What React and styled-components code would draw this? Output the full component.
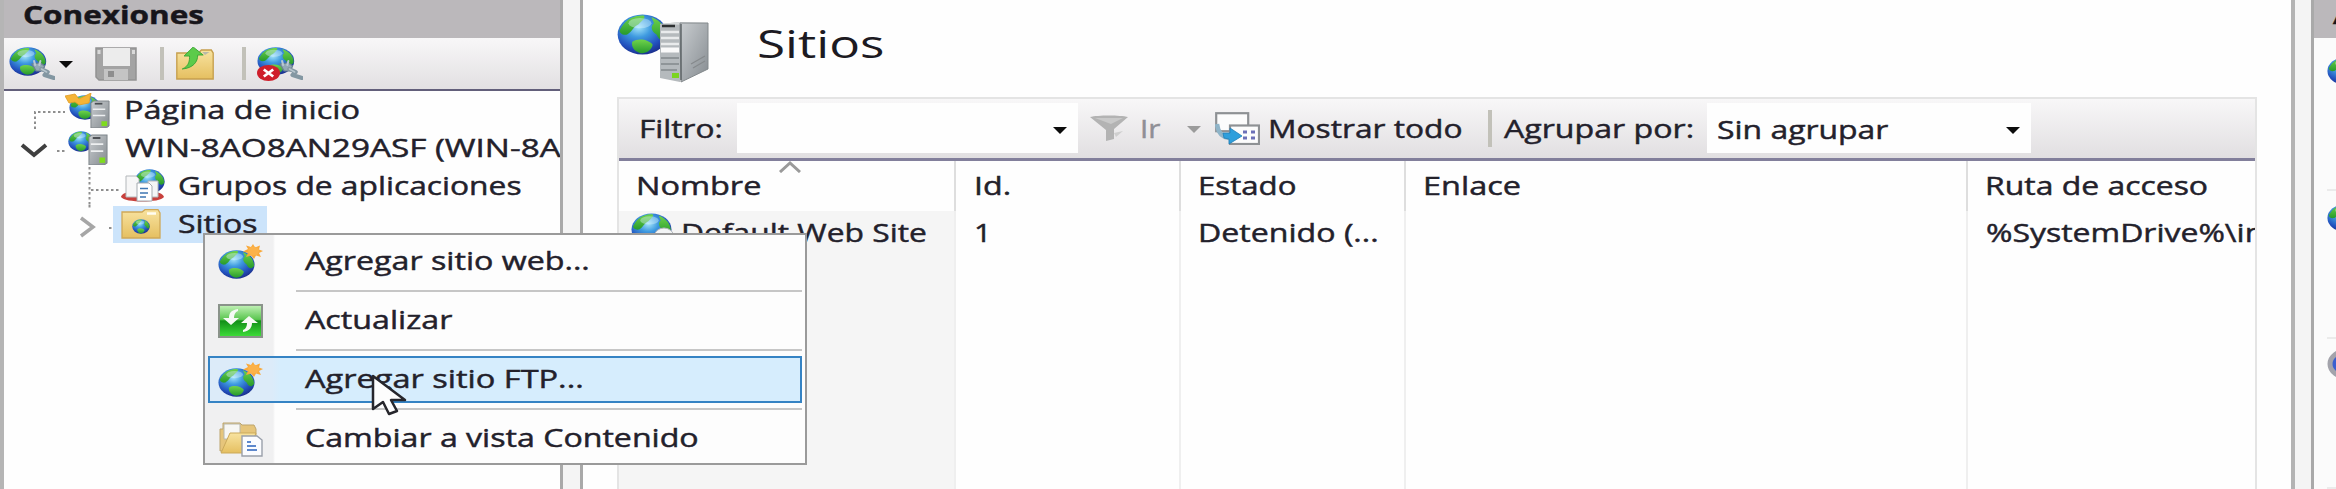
import React, { useLayoutEffect, useRef, useState } from "react";
import styled, { createGlobalStyle } from "styled-components";

const Global = createGlobalStyle`
  *, *::before, *::after { box-sizing: border-box; }
  html, body { margin: 0; padding: 0; background: #fdfdfd; }
  body {
    font-family: "Open Sans", "Noto Sans", sans-serif;
    font-size: 25.2px;
    color: #23212b;
    overflow: hidden;
  }
  svg { display: block; flex: none; }
`;

const Window = styled.div`
  position: relative;
  display: flex;
  width: 2336px;
  height: 489px;
  overflow: hidden;
  background: #fdfdfd;
`;

/* ---------- text ---------- */

const TextBox = styled.span`
  display: inline-block;
  flex: none;
  width: ${(p) => p.$w}px;
  height: 38px;
  line-height: 38px;
  margin-left: ${(p) => p.$gap || 0}px;
  white-space: nowrap;
  color: ${(p) => p.$color || "inherit"};
  font-size: ${(p) => (p.$size ? p.$size + "px" : "inherit")};
  font-weight: ${(p) => (p.$bold ? 700 : 400)};
  -webkit-text-stroke: ${(p) => (p.$size ? "0" : "0.45px currentColor")};
`;

const TextRun = styled.span`
  display: inline-block;
  transform-origin: 0 50%;
`;

/* Wide-set label: the run is stretched horizontally to fill its box. */
function Label({ children, w, ...rest }) {
  const ref = useRef(null);
  const [scale, setScale] = useState(1);
  useLayoutEffect(() => {
    setScale(w / ref.current.offsetWidth);
  }, [w]);
  return (
    <TextBox $w={w} {...rest}>
      <TextRun ref={ref} style={{ transform: `scaleX(${scale})` }}>
        {children}
      </TextRun>
    </TextBox>
  );
}

/* ---------- icons ---------- */

const HiddenDefs = styled.svg`
  position: absolute;
`;

function Gradients() {
  return (
    <HiddenDefs width="0" height="0">
      <defs>
        <radialGradient id="sea" cx="0.42" cy="0.32" r="0.7">
          <stop offset="0" stopColor="#a4e4fa" />
          <stop offset="0.35" stopColor="#3f9be0" />
          <stop offset="0.75" stopColor="#2250bd" />
          <stop offset="1" stopColor="#1b2f8c" />
        </radialGradient>
        <linearGradient id="land" x1="0" y1="0" x2="0" y2="1">
          <stop offset="0" stopColor="#6fd34b" />
          <stop offset="1" stopColor="#279a2c" />
        </linearGradient>
        <linearGradient id="folder" x1="0" y1="0" x2="0" y2="1">
          <stop offset="0" stopColor="#f8e3a0" />
          <stop offset="1" stopColor="#e5bf60" />
        </linearGradient>
        <linearGradient id="steel" x1="0" y1="0" x2="1" y2="1">
          <stop offset="0" stopColor="#c9cdd0" />
          <stop offset="1" stopColor="#858b90" />
        </linearGradient>
        <linearGradient id="refresh" x1="0" y1="0" x2="0" y2="1">
          <stop offset="0" stopColor="#c4f3b9" />
          <stop offset="0.45" stopColor="#5bc650" />
          <stop offset="0.5" stopColor="#128f18" />
          <stop offset="1" stopColor="#3fe03a" />
        </linearGradient>
      </defs>
    </HiddenDefs>
  );
}

const Icon = ({ w = 44, h = 34, vb = "0 0 44 34", children }) => (
  <svg width={w} height={h} viewBox={vb} preserveAspectRatio="none">
    {children}
  </svg>
);

/* Globe on a 40x40 grid. */
function Globe({ x = 0, y = 0, w = 36, h = 30, land = "url(#land)" }) {
  return (
    <g transform={`translate(${x} ${y}) scale(${w / 40} ${h / 40})`}>
      <circle cx="20" cy="20" r="19.5" fill="url(#sea)" />
      <path d="M4 12C8 4 15 1 21 1.500C23 4 19 7 17 10C13 12 12 17 8 20C4 21 2 18 2 16Z" fill={land} />
      <path d="M27 3C35 7 39 14 39 22C36 27 33 26 31 20C27 17 26 12 29 9Z" fill={land} />
      <path d="M12 27C17 23 25 25 28 30C27 36 22 39 18 38C13 36 11 31 12 27Z" fill={land} />
      <ellipse cx="18" cy="9" rx="9" ry="5" fill="#dff6ff" opacity="0.4" />
    </g>
  );
}

const Plug = () => (
  <g fill="none" strokeLinecap="round">
    <path d="M22 17L30 16L34 19L32 24L26 24Z" fill="#93a9b6" stroke="#6c8391" strokeWidth="1.200" />
    <path d="M24 14L25 18M30 14L29 18" stroke="#b9c8d1" strokeWidth="2" />
    <path d="M31 22L37 25L34 28L43 31" stroke="#8397a2" strokeWidth="4" strokeLinejoin="round" />
    <path d="M31 22L36 25" stroke="#b7c5cd" strokeWidth="1.500" />
  </g>
);

const ConnectIcon = () => (
  <Icon w={46}>
    <Globe w={36} h={29} />
    <Plug />
  </Icon>
);

const DisconnectIcon = () => (
  <Icon w={46}>
    <Globe w={36} h={28} />
    <Plug />
    <ellipse cx="11" cy="26" rx="11" ry="8" fill="#cf1f2b" />
    <path d="M6.500 22.500L15.500 29.500M15.500 22.500L6.500 29.500" stroke="#fff" strokeWidth="2.600" />
  </Icon>
);

const FloppyIcon = () => (
  <Icon>
    <path d="M2 1H42V33H5L2 30Z" fill="#a3a3a3" stroke="#939393" strokeWidth="1.500" />
    <rect x="9" y="1" width="27" height="18" fill="#ececec" />
    <rect x="10" y="22" width="24" height="11" fill="#c4c4c4" />
    <rect x="14" y="24" width="6" height="6" fill="#8e8e8e" />
    <rect x="3.500" y="3" width="3" height="4" fill="#d9d9d9" />
    <rect x="38" y="3" width="3" height="4" fill="#d9d9d9" />
  </Icon>
);

const UpFolderIcon = () => (
  <Icon w={40}>
    <path d="M2 6H26L29 3H40L42 6V32H2Z" fill="url(#folder)" stroke="#c69f4d" strokeWidth="1.500" />
    <path d="M30 5L38 5L33 8Z" fill="#b9b9a8" />
    <path d="M8 22C16 19 16 13 16 9H10L20 0L31 8H25C25 15 20 21 8 22Z" fill="#5ccb4a" stroke="#3ca637" strokeWidth="1" />
  </Icon>
);

const Tower = ({ x, y, w = 21, h = 28 }) => (
  <g transform={`translate(${x} ${y}) scale(${w / 21} ${h / 28})`}>
    <path d="M1 2L4 0H20V26L17 28H1Z" fill="url(#steel)" stroke="#7d8489" strokeWidth="1" />
    <path d="M5 2.800H13" stroke="#4a4e52" strokeWidth="1.800" />
    <path d="M3 8.500H16M3 15H16" stroke="#eef0f1" strokeWidth="1.500" />
    <rect x="12" y="21" width="6" height="5" fill="#7edb1e" />
  </g>
);

const HomeIcon = () => (
  <Icon w={46} h={35} vb="0 0 46 35">
    <Globe x={4} y={2} w={32} h={25} />
    <path d="M0 3L10 1L14 6L22 2L26 0L24 10L14 12L10 9L4 10Z" fill="#f5b437" stroke="#e09a22" strokeWidth="0.800" />
    <Tower x={25} y={8} w={20} h={27} />
  </Icon>
);

const ServerIcon = () => (
  <Icon w={42} h={34} vb="0 0 42 34">
    <Globe x={0} y={0} w={26} h={21} />
    <Tower x={20} y={4} w={20} h={30} />
  </Icon>
);

const PoolsIcon = () => (
  <Icon w={46} h={34} vb="0 0 46 34">
    <Globe x={14} y={0} w={31} h={25} />
    <path d="M1 28C2 23 10 22 22 23C34 22 43 23 44 28C40 34 5 34 1 28Z" fill="#c8403c" />
    <path d="M6 7H16L19 10V28H6Z" fill="#f7f7f7" stroke="#b4b8bb" />
    <path d="M28 12H38V28H28Z" fill="#f3f5f6" stroke="#b4b8bb" />
    <path d="M17 14H29L32 17V32H17Z" fill="#fff" stroke="#a5abb0" />
    <path d="M20 19.500H28M20 24H28M20 28H26" stroke="#3f77b3" strokeWidth="1.700" />
  </Icon>
);

const SitesIcon = () => (
  <Icon w={40} h={30} vb="0 0 40 30">
    <path d="M1 3H21L24 0.700H37L39 4V29H1Z" fill="url(#folder)" stroke="#cfa857" strokeWidth="1.300" />
    <path d="M26 4.500H35" stroke="#fffdf2" strokeWidth="2.500" />
    <Globe x={11} y={10} w={18} h={15} />
  </Icon>
);

const AddSiteIcon = () => (
  <Icon w={45} h={35} vb="0 0 45 35">
    <Globe x={0} y={6} w={37} h={29} />
    <path
      d="M35 0L37 3.500L42 1.500L41 5.500L45 7L41 9L43 13L38 11.500L36 15L33 11.500L28 13L30 9L25 7.500L30 5L28 1.500L33 3Z"
      fill="#f9a93a"
    />
    <ellipse cx="35.500" cy="7" rx="5.500" ry="4.500" fill="#fbb24a" />
  </Icon>
);

const RefreshIcon = () => (
  <Icon w={45} h={34} vb="0 0 45 34">
    <rect x="1" y="1" width="43" height="32" fill="url(#refresh)" stroke="#8a938a" strokeWidth="2" />
    <path d="M20 5C13 6 11 9 11 14H5L13 21L21 14H16C16 11 17 8 20 7Z" fill="#f6faf5" />
    <path d="M25 28C32 27 34 23 34 19H40L31 12L23 19H29C29 22 28 25 25 26Z" fill="#f6faf5" />
  </Icon>
);

const ContentIcon = () => (
  <Icon w={45} h={36} vb="0 0 45 36">
    <path d="M2 8H5V2H22L24 4H36L38 8V30H2Z" fill="#e6c57b" stroke="#bda56c" />
    <path d="M6 3H22V18H6Z" fill="#f7f7f4" stroke="#b8b8ac" />
    <path d="M3 32L12 12H38L30 32Z" fill="url(#folder)" stroke="#cba95a" />
    <path d="M24 15H39L44 19V35H24Z" fill="#fbfcff" stroke="#9aa0ab" strokeWidth="1.400" />
    <path d="M29 21H33M29 25H38M29 29H39" stroke="#5e88cc" strokeWidth="1.800" />
  </Icon>
);

const FeatureIcon = () => (
  <Icon w={92} h={69} vb="0 0 92 69">
    <Globe x={0} y={0} w={51} h={41} />
    <path d="M43 10L63 8V68L43 64Z" fill="#b5babd" />
    <path d="M43 10L63 8L91 9L72 11Z" fill="#d6d9da" />
    <path d="M63 9H91V55L64 68Z" fill="url(#steel)" stroke="#83898c" />
    <path d="M45 12H58" stroke="#2e3133" strokeWidth="2.500" />
    <path d="M44 18H62M44 24H62M44 30H62" stroke="#e9ebec" strokeWidth="2.600" />
    <path d="M44 36H62" stroke="#fafafa" strokeWidth="5" />
    <path d="M44 44H62M44 50H62M44 56H60" stroke="#8f9598" strokeWidth="1.800" />
    <path d="M64 10V66" stroke="#5e6467" strokeWidth="1.500" />
    <rect x="55" y="59" width="7" height="5" fill="#7bd41f" />
    <path d="M74 50L88 42M76 54L88 47" stroke="#85898c" strokeWidth="1.200" />
  </Icon>
);

const FunnelIcon = () => (
  <Icon w={38} h={27} vb="0 0 38 27">
    <path d="M0 2C8 0 30 0 38 2L24 14V24L16 26V15Z" fill="#b3b3b3" />
    <path d="M5 3H33L21 9Z" fill="#c9c9c9" />
    <path d="M24 18L33 16L26 22Z" fill="#cfcfcf" />
  </Icon>
);

const ShowAllIcon = () => (
  <Icon w={45} h={33} vb="0 0 45 33">
    <rect x="1.200" y="1.200" width="32" height="18" fill="#fcfcfc" stroke="#8e9194" strokeWidth="2.200" />
    <rect x="15" y="13.500" width="29" height="18.500" fill="#fcfcfc" stroke="#8e9194" strokeWidth="2.200" />
    <path d="M28 20H32M36 20H40M28 26H32M36 26H40" stroke="#6c70b8" strokeWidth="3" />
    <path d="M2 12C3 21 7 25 14 26" fill="none" stroke="#8fb4c8" strokeWidth="4.500" />
    <path d="M8 21L15 21V16L27 24L14 32V27L9 26Z" fill="#2e9fdc" stroke="#1f7fb8" strokeWidth="0.800" />
  </Icon>
);

const SiteIcon = () => (
  <Icon w={42} h={34} vb="0 0 42 34">
    <Globe x={0} y={0} w={41} h={33} />
    <ellipse cx="33" cy="24" rx="10" ry="9" fill="#f2f4f5" stroke="#b4b9bd" />
  </Icon>
);

const HelpIcon = () => (
  <Icon w={42} h={32} vb="0 0 42 32">
    <ellipse cx="21" cy="16" rx="18" ry="13.500" fill="#3b5fd0" stroke="#a3a3ab" strokeWidth="5" />
  </Icon>
);

const Caret = styled.span`
  flex: none;
  width: 0;
  height: 0;
  border: 7px solid transparent;
  border-top: 7px solid ${(p) => p.$color || "#0c0c0c"};
  border-bottom: 0;
  margin: 2px ${(p) => p.$right || 0}px 0 ${(p) => p.$left || 0}px;
`;

/* ---------- connections pane ---------- */

const Connections = styled.aside`
  flex: none;
  width: 563px;
  border-left: 4px solid #b5b5b5;
  border-right: 3px solid #a9a9a9;
  background: #fefefe;
  overflow: hidden;
`;

const PaneHeader = styled.header`
  display: flex;
  align-items: flex-start;
  height: 38px;
  padding: 0 0 0 ${(p) => p.$pad}px;
  background: #bbb8bb;
  overflow: hidden;
  color: #17151a;
  span { line-height: 29px; height: 29px; }
`;

const Toolbar = styled.div`
  display: flex;
  align-items: center;
  height: 53px;
  padding-left: 5px;
  background: linear-gradient(#f8f7f8, #e2e0e2);
  border-bottom: 2px solid #625f7a;
`;

const Separator = styled.span`
  flex: none;
  width: ${(p) => p.$w || 4}px;
  height: ${(p) => p.$h || 33}px;
  margin: 0 ${(p) => p.$right}px 0 ${(p) => p.$left}px;
  background: #c2c1b9;
`;

const Spacer = styled.span`
  flex: none;
  width: ${(p) => p.$w}px;
`;

const TreeRow = styled.div`
  display: flex;
  align-items: center;
  height: 38px;
  ${TextBox} { margin-top: -3px; }
`;

const SelectedNode = styled.div`
  display: flex;
  align-items: center;
  width: 154px;
  height: 37px;
  padding-left: 8px;
  background: #cce4fb;
`;

const Guide = ({ w, children }) => (
  <svg width={w} height="38" viewBox={`0 0 ${w} 38`} fill="none" stroke="#8e8e8e" strokeWidth="2" strokeDasharray="2.500 2.500">
    {children}
  </svg>
);

/* ---------- centre pane ---------- */

const Splitter = styled.div`
  flex: none;
  width: ${(p) => p.$w}px;
  background: #f4f4f4;
`;

const Main = styled.main`
  flex: none;
  width: 1715px;
  display: flex;
  flex-direction: column;
  padding: 14px 34px 0 34px;
  border-left: 3px solid #a9a9a9;
  border-right: 4px solid #b3b3b3;
  background: #fefefe;
`;

const FeatureTitle = styled.div`
  display: flex;
  height: 83px;
`;

const TitleText = styled.div`
  margin: 11px 0 0 48px;
  color: #1c1a22;
`;

const ListFrame = styled.section`
  flex: 1;
  display: flex;
  flex-direction: column;
  border: 2px solid #e4e4e4;
  border-bottom: 0;
  min-height: 0;
`;

const FilterBar = styled.div`
  display: flex;
  align-items: center;
  height: 62px;
  padding-bottom: 1px;
  background: linear-gradient(#f8f7f8, #e1dfe1);
  border-bottom: 3px solid #827f9b;
`;

const Combo = styled.div`
  flex: none;
  display: flex;
  align-items: center;
  justify-content: space-between;
  width: ${(p) => p.$w}px;
  height: 50px;
  margin-left: ${(p) => p.$gap}px;
  padding: 2px 11px 0 10px;
  background: #fefefe;
`;

const Columns = styled.div`
  flex: 1;
  display: flex;
  overflow: hidden;
`;

const Column = styled.div`
  flex: none;
  width: ${(p) => p.$w}px;
  display: flex;
  flex-direction: column;
`;

const ColumnHead = styled.div`
  display: flex;
  flex-direction: column;
  height: 50px;
  padding: 5px 0 0 ${(p) => p.$pad}px;
  border-right: ${(p) => (p.$last ? 0 : 2)}px solid #dedede;
`;

const SortedHead = styled(ColumnHead)`
  padding-top: 0;
  svg { margin-left: 142px; }
  span { margin-top: -7px; }
  span > span { margin-top: 0; }
`;

const ColumnBody = styled.div`
  flex: 1;
  display: flex;
  align-items: flex-start;
  padding: 2px 0 0 ${(p) => p.$pad}px;
  background: ${(p) => (p.$sorted ? "#f5f5f5" : "transparent")};
  border-right: ${(p) => (p.$last ? 0 : 2)}px solid #efefef;
`;

/* ---------- actions pane ---------- */

const Actions = styled.aside`
  flex: none;
  width: 25px;
  border-left: 3px solid #a9a9a9;
  background: #fbfbfb;
  overflow: hidden;
`;

const ActionGroup = styled.div`
  height: ${(p) => p.$h}px;
  margin-left: 13px;
  padding-top: ${(p) => p.$top}px;
  border-bottom: 2px solid #ebebeb;
`;

/* ---------- context menu ---------- */

const Menu = styled.div`
  position: absolute;
  left: 203px;
  top: 233px;
  width: 604px;
  height: 232px;
  padding: 3px 3px 0;
  border: 2px solid #9a9a9a;
  background: linear-gradient(90deg, #f0f0f1 0 68px, #fdfdfd 70px);
`;

const MenuItem = styled.div`
  display: flex;
  align-items: center;
  height: 47px;
  padding-left: 8px;
  border: 2px solid ${(p) => (p.$active ? "#3583c4" : "transparent")};
  background: ${(p) => (p.$active ? "linear-gradient(90deg, #dcebf9 0 62px, #d6edfd 70px)" : "transparent")};
  ${TextBox} { margin-top: -3px; }
`;

const MenuLine = styled.div`
  height: 2px;
  margin: 5px 0 5px 88px;
  background: #c6c6c6;
`;

const Pointer = styled.svg`
  position: absolute;
  left: 371px;
  top: 374px;
`;

const menu = [
  { text: "Agregar sitio web...", w: 285, icon: AddSiteIcon },
  { text: "Actualizar", w: 147, icon: RefreshIcon },
  { text: "Agregar sitio FTP...", w: 279, icon: AddSiteIcon, active: true },
  { text: "Cambiar a vista Contenido", w: 394, icon: ContentIcon },
];

export default function App() {
  return (
    <Window>
      <Global />
      <Gradients />

      <Connections>
        <PaneHeader $pad={19}>
          <Label w={181} $bold>Conexiones</Label>
        </PaneHeader>
        <Toolbar>
          <ConnectIcon />
          <Caret $left={4} />
          <Spacer $w={21} />
          <FloppyIcon />
          <Separator $left={22} $right={11} />
          <UpFolderIcon />
          <Separator $left={27} $right={11} />
          <DisconnectIcon />
        </Toolbar>
        <TreeRow>
          <Guide w={61}>
            <path d="M31 38V21H61" />
          </Guide>
          <HomeIcon />
          <Label w={236} $gap={13}>Página de inicio</Label>
        </TreeRow>
        <TreeRow>
          <Guide w={64}>
            <path d="M18 16L30 26L42 16" stroke="#3f3f3f" strokeWidth="4" strokeDasharray="none" />
            <path d="M53 22H62" />
          </Guide>
          <ServerIcon />
          <Label w={436} $gap={15}>WIN-8AO8AN29ASF (WIN-8A</Label>
        </TreeRow>
        <TreeRow>
          <Guide w={116}>
            <path d="M85.500 0V38M87 23H116" />
          </Guide>
          <PoolsIcon />
          <Label w={344} $gap={12}>Grupos de aplicaciones</Label>
        </TreeRow>
        <TreeRow>
          <Guide w={109}>
            <path d="M85.500 0V3M105 23H109" />
            <path d="M77 13L89 22L77 31" stroke="#a6a6a6" strokeWidth="3.500" strokeDasharray="none" />
          </Guide>
          <SelectedNode>
            <SitesIcon />
            <Label w={80} $gap={17}>Sitios</Label>
          </SelectedNode>
        </TreeRow>
      </Connections>

      <Splitter $w={17} />

      <Main>
        <FeatureTitle>
          <FeatureIcon />
          <TitleText>
            <Label w={127} $size={37.5}>Sitios</Label>
          </TitleText>
        </FeatureTitle>
        <ListFrame>
          <FilterBar>
            <Label w={84} $gap={20}>Filtro:</Label>
            <Combo $w={341} $gap={14}>
              <span />
              <Caret />
            </Combo>
            <Spacer $w={12} />
            <FunnelIcon />
            <Label w={20} $gap={12} $color="#8f8f95">Ir</Label>
            <Caret $color="#9b9b9b" $left={27} />
            <Spacer $w={14} />
            <ShowAllIcon />
            <Label w={195} $gap={8}>Mostrar todo</Label>
            <Separator $left={25} $right={12} $h={37} $w={4} />
            <Label w={190}>Agrupar por:</Label>
            <Combo $w={324} $gap={13}>
              <Label w={171}>Sin agrupar</Label>
              <Caret />
            </Combo>
          </FilterBar>
          <Columns>
            <Column $w={337}>
              <SortedHead $pad={17}>
                <svg width="24" height="12" viewBox="0 0 24 12">
                  <path d="M2 11L12 2L22 11" fill="none" stroke="#9a9a9a" strokeWidth="3" />
                </svg>
                <Label w={125}>Nombre</Label>
              </SortedHead>
              <ColumnBody $pad={12} $sorted>
                <SiteIcon />
                <Label w={246} $gap={8}>Default Web Site</Label>
              </ColumnBody>
            </Column>
            <Column $w={225}>
              <ColumnHead $pad={18}><Label w={37}>Id.</Label></ColumnHead>
              <ColumnBody $pad={18}><Label w={17}>1</Label></ColumnBody>
            </Column>
            <Column $w={225}>
              <ColumnHead $pad={17}><Label w={99}>Estado</Label></ColumnHead>
              <ColumnBody $pad={17}><Label w={181}>Detenido (...</Label></ColumnBody>
            </Column>
            <Column $w={562}>
              <ColumnHead $pad={17}><Label w={98}>Enlace</Label></ColumnHead>
              <ColumnBody $pad={17} />
            </Column>
            <Column $w={287}>
              <ColumnHead $pad={17} $last><Label w={223}>Ruta de acceso</Label></ColumnHead>
              <ColumnBody $pad={18} $last><Label w={278}>%SystemDrive%\in</Label></ColumnBody>
            </Column>
          </Columns>
        </ListFrame>
      </Main>

      <Splitter $w={16} />

      <Actions>
        <PaneHeader $pad={19}>
          <Label w={150} $bold>Acciones</Label>
        </PaneHeader>
        <ActionGroup $h={153} $top={19}>
          <Icon><Globe w={36} h={28} /></Icon>
        </ActionGroup>
        <ActionGroup $h={148} $top={13}>
          <Icon><Globe w={36} h={28} /></Icon>
        </ActionGroup>
        <ActionGroup $h={150} $top={9}>
          <HelpIcon />
        </ActionGroup>
      </Actions>

      <Menu>
        {menu.map(({ text, w, icon: ItemIcon, active }, i) => (
          <React.Fragment key={text}>
            {i > 0 && <MenuLine />}
            <MenuItem $active={active}>
              <ItemIcon />
              <Label w={w} $gap={42}>{text}</Label>
            </MenuItem>
          </React.Fragment>
        ))}
      </Menu>

      <Pointer width="37" height="42" viewBox="0 0 37 42">
        <path d="M2 2V35L12 28L18 40L26 37L20 26H34Z" fill="#fdfdfd" stroke="#26262c" strokeWidth="2.500" strokeLinejoin="round" />
      </Pointer>
    </Window>
  );
}
